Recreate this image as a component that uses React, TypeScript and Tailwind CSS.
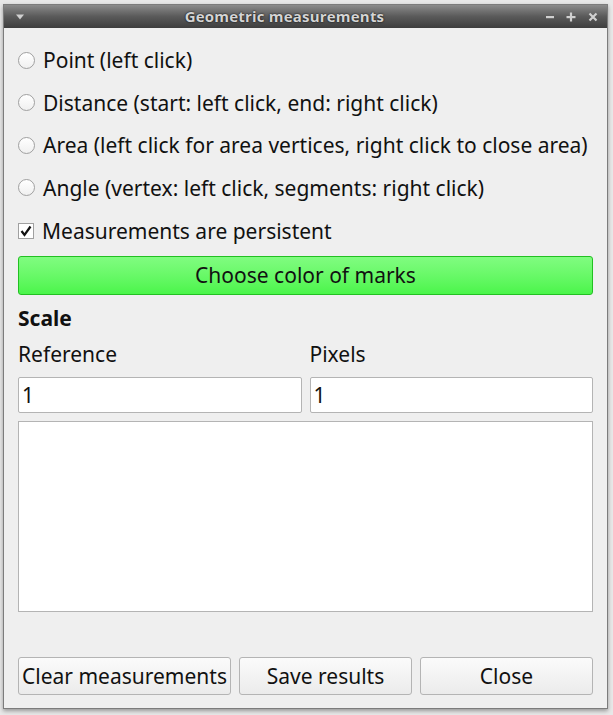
import React from "react";

const font = { fontFamily: '"Noto Sans", "Open Sans", sans-serif' };

function Radio({ label }: { label: string }) {
  return (
    <div className="flex items-center h-full">
      <div className="w-[17px] h-[17px] rounded-full border border-[#a0a0a0] bg-gradient-to-b from-white to-[#f0f0f0] shrink-0" />
      <span className="ml-[8px] text-[21px] text-[#111] leading-none whitespace-nowrap pt-[1px]">{label}</span>
    </div>
  );
}

export default function App() {
  return (
    <div className="w-[613px] h-[715px] bg-[#e8e8e8] relative" style={font}>
      <div className="absolute left-[3px] top-[4px] w-[605px] h-[705px] border border-[#7c7c7c] bg-[#efefef] flex flex-col shadow-[0_2px_4px_rgba(0,0,0,0.35)]">
        {/* title bar */}
        <div className="h-[23px] shrink-0 bg-gradient-to-b from-[#8c8c8c] via-[#5a5a5a] to-[#3e3e3e] flex items-center px-[8px] text-[#d4d4d4] relative">
          <svg width="10" height="8" viewBox="0 0 10 8" className="ml-[3px]">
            <path d="M1 1.5 L9 1.5 L5 6.5 Z" fill="#d0d0d0" />
          </svg>
          <div className="absolute left-0 right-[42px] top-0 bottom-0 flex items-center justify-center font-bold text-[15px] tracking-[0.2px] [text-shadow:0_0_2px_#000]" style={{ fontFamily: '"Open Sans", "Noto Sans", sans-serif' }}>
            Geometric measurements
          </div>
          <div className="flex-1" />
          <div className="flex items-center text-[#d0d0d0]">
            <svg width="12" height="12" viewBox="0 0 12 12"><rect x="2" y="5" width="8" height="2.2" fill="currentColor" /></svg>
            <div className="w-[9px]" />
            <svg width="12" height="12" viewBox="0 0 12 12"><rect x="1.5" y="5" width="9" height="2.2" fill="currentColor" /><rect x="4.9" y="1.5" width="2.2" height="9" fill="currentColor" /></svg>
            <div className="w-[10px]" />
            <svg width="12" height="12" viewBox="0 0 12 12"><path d="M2.5 2.5 L9.5 9.5 M9.5 2.5 L2.5 9.5" stroke="currentColor" strokeWidth="2.2" /></svg>
          </div>
        </div>

        <div className="flex-1 flex flex-col px-[14px]">
          <div className="h-[11px]" />
          <div className="h-[42px]"><Radio label="Point (left click)" /></div>
          <div className="h-[43px]"><Radio label="Distance (start: left click, end: right click)" /></div>
          <div className="h-[42px]"><Radio label="Area (left click for area vertices, right click to close area)" /></div>
          <div className="h-[43px]"><Radio label="Angle (vertex: left click, segments: right click)" /></div>
          <div className="h-[44px] flex items-center">
            <div className="w-[16px] h-[16px] border border-[#a0a0a0] bg-white flex items-center justify-center shrink-0">
              <svg width="12" height="12" viewBox="0 0 12 12">
                <path d="M1.5 6 L4.5 10 L10.5 1.5" stroke="#111" strokeWidth="2.2" fill="none" />
              </svg>
            </div>
            <span className="ml-[8px] text-[21px] text-[#111] leading-none pt-[1px]">Measurements are persistent</span>
          </div>
          <div className="h-[3px]" />
          <div className="h-[39px] rounded-[3px] border border-[#22c022] bg-gradient-to-b from-[#80fc80] to-[#4af54a] flex items-center justify-center text-[21px] text-[#111] pt-[1px]">
            Choose color of marks
          </div>
          <div className="h-[40px] mt-[3px] flex items-center font-bold text-[21px] text-[#111] pt-[1px]">Scale</div>
          <div className="h-[32px] flex items-center text-[21px] text-[#111] pt-[1px]">
            <div className="flex-1">Reference</div>
            <div className="w-[8px]" />
            <div className="flex-1">Pixels</div>
          </div>
          <div className="h-[7px]" />
          <div className="h-[36px] flex">
            <div className="flex-1 bg-white border border-[#b4b4b4] rounded-[2px] flex items-center px-[3px] text-[21px] text-[#111] pt-[1px]">1</div>
            <div className="w-[8px]" />
            <div className="flex-1 bg-white border border-[#b4b4b4] rounded-[2px] flex items-center px-[3px] text-[21px] text-[#111] pt-[1px]">1</div>
          </div>
          <div className="h-[8px]" />
          <div className="h-[191px] bg-white border border-[#b4b4b4]" />
          <div className="flex-1" />
          <div className="h-[38px] flex gap-[8px] text-[21px] text-[#111]">
            <div className="w-[213px] rounded-[3px] border border-[#b4b4b4] bg-gradient-to-b from-[#fbfbfb] to-[#ebebeb] flex items-center justify-center pt-[1px]">Clear measurements</div>
            <div className="w-[173px] rounded-[3px] border border-[#b4b4b4] bg-gradient-to-b from-[#fbfbfb] to-[#ebebeb] flex items-center justify-center pt-[1px]">Save results</div>
            <div className="flex-1 rounded-[3px] border border-[#b4b4b4] bg-gradient-to-b from-[#fbfbfb] to-[#ebebeb] flex items-center justify-center pt-[1px]">Close</div>
          </div>
          <div className="h-[13px]" />
        </div>
      </div>
    </div>
  );
}
